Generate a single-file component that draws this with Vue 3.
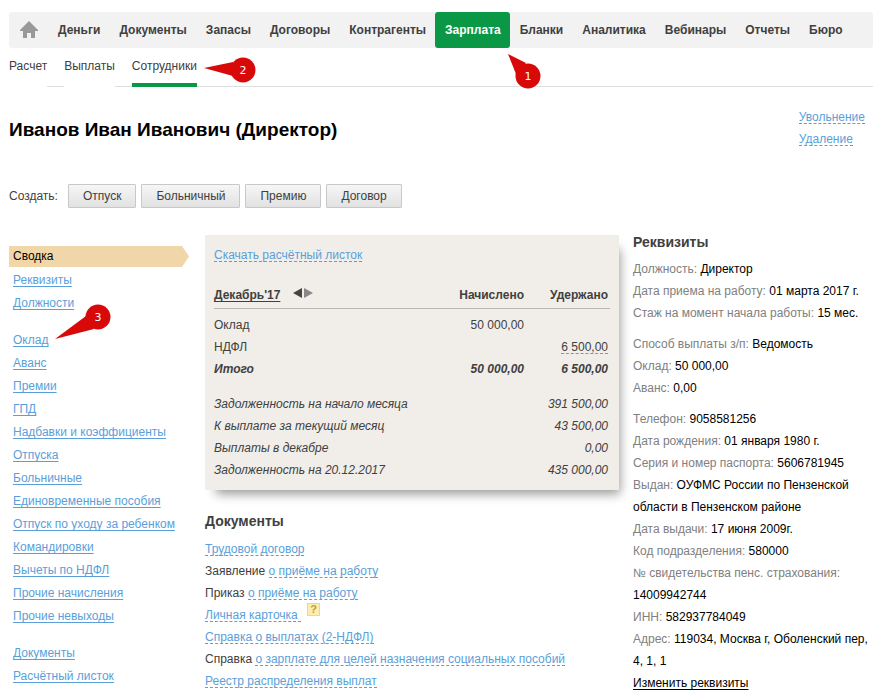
<script setup>
const mainMenu = [
  { title: 'Деньги' },
  { title: 'Документы' },
  { title: 'Запасы' },
  { title: 'Договоры' },
  { title: 'Контрагенты' },
  { title: 'Зарплата', active: true },
  { title: 'Бланки' },
  { title: 'Аналитика' },
  { title: 'Вебинары' },
  { title: 'Отчеты' },
  { title: 'Бюро' },
]

const subMenu = [
  { title: 'Расчет' },
  { title: 'Выплаты' },
  { title: 'Сотрудники', active: true },
]

const createActions = ['Отпуск', 'Больничный', 'Премию', 'Договор']

const sections = [
  ['Сводка', 'Реквизиты', 'Должности'],
  [
    'Оклад',
    'Аванс',
    'Премии',
    'ГПД',
    'Надбавки и коэффициенты',
    'Отпуска',
    'Больничные',
    'Единовременные пособия',
    'Отпуск по уходу за ребенком',
    'Командировки',
    'Вычеты по НДФЛ',
    'Прочие начисления',
    'Прочие невыходы',
  ],
  ['Документы', 'Расчётный листок'],
]

const balances = [
  { title: 'Задолженность на начало месяца', sum: '391 500,00' },
  { title: 'К выплате за текущий месяц', sum: '43 500,00' },
  { title: 'Выплаты в декабре', sum: '0,00' },
  { title: 'Задолженность на 20.12.2017', sum: '435 000,00' },
]

const documents = [
  { link: 'Трудовой договор' },
  { prefix: 'Заявление', link: 'о приёме на работу' },
  { prefix: 'Приказ', link: 'о приёме на работу' },
  { link: 'Личная карточка', help: true },
  { link: 'Справка о выплатах (2-НДФЛ)' },
  { prefix: 'Справка', link: 'о зарплате для целей назначения социальных пособий' },
  { link: 'Реестр распределения выплат' },
]

const details = [
  [
    ['Должность', 'Директор'],
    ['Дата приема на работу', '01 марта 2017 г.'],
    ['Стаж на момент начала работы', '15 мес.'],
  ],
  [
    ['Способ выплаты з/п', 'Ведомость'],
    ['Оклад', '50 000,00'],
    ['Аванс', '0,00'],
  ],
  [
    ['Телефон', '9058581256'],
    ['Дата рождения', '01 января 1980 г.'],
    ['Серия и номер паспорта', '5606781945'],
    ['Выдан', 'ОУФМС России по Пензенской области в Пензенском районе'],
    ['Дата выдачи', '17 июня 2009г.'],
    ['Код подразделения', '580000'],
    ['№ свидетельства пенс. страхования', '14009942744'],
    ['ИНН', '582937784049'],
    ['Адрес', '119034, Москва г, Оболенский пер, 4, 1, 1'],
  ],
]
</script>

<template>
  <div class="page">
    <nav class="main-menu">
      <a href="#" class="home" aria-label="Главная">
        <svg width="18" height="18" viewBox="0 0 18 18">
          <path d="M9 0 L18 9 V10 H15 V17 H11 V12 H7 V17 H3 V10 H0 V9 Z" fill="#999" />
        </svg>
      </a>
      <div v-for="item in mainMenu" :key="item.title" class="main-item">
        <a href="#" class="main-link" :class="{ active: item.active }">{{ item.title }}</a>
        <svg v-if="item.active" class="callout callout-main" width="34" height="36" viewBox="0 0 34 36">
          <path d="M0 0 L18 9 L8 20 Z" fill="#d80909" />
          <circle cx="20" cy="22" r="12.5" fill="#d80909" />
          <text x="20" y="26" text-anchor="middle">1</text>
        </svg>
      </div>
    </nav>

    <nav class="sub-menu">
      <div v-for="item in subMenu" :key="item.title" class="sub-item" :class="{ active: item.active }">
        <a href="#">{{ item.title }}</a>
        <svg v-if="item.active" class="callout callout-sub" width="52" height="26" viewBox="0 0 52 26">
          <path d="M0 11 L29 5 V19 Z" fill="#d80909" />
          <circle cx="39" cy="13" r="12.5" fill="#d80909" />
          <text x="39" y="17" text-anchor="middle">2</text>
        </svg>
      </div>
    </nav>

    <header class="head">
      <h1>Иванов Иван Иванович (Директор)</h1>
      <div class="head-actions">
        <a href="#" class="dashed">Увольнение</a>
        <a href="#" class="dashed">Удаление</a>
      </div>
    </header>

    <div class="create">
      <span class="create-label">Создать:</span>
      <button v-for="action in createActions" :key="action" type="button" class="btn">{{ action }}</button>
    </div>

    <main class="columns">
      <aside class="sections">
        <ul v-for="(group, g) in sections" :key="g">
          <li v-for="(section, i) in group" :key="section">
            <span v-if="g === 0 && i === 0" class="current">{{ section }}</span>
            <a v-else href="#">{{ section }}</a>
            <svg v-if="section === 'Оклад'" class="callout callout-section" width="56" height="36" viewBox="0 0 56 36">
              <path d="M0 35 L31 12 L39 25 Z" fill="#d80909" />
              <circle cx="43" cy="13" r="12.5" fill="#d80909" />
              <text x="43" y="17" text-anchor="middle">3</text>
            </svg>
          </li>
        </ul>
      </aside>

      <div class="center">
        <section class="payslip">
          <div class="row"><a href="#" class="dashed">Скачать расчётный листок</a></div>
          <table>
            <thead>
              <tr>
                <th scope="col">
                  <div class="period">
                    <a href="#">Декабрь'17</a>
                    <button type="button" class="arrow" aria-label="Предыдущий месяц">
                      <svg width="9" height="10" viewBox="0 0 9 10"><path d="M0 5 L9 0 V10 Z" fill="#444" /></svg>
                    </button>
                    <button type="button" class="arrow" aria-label="Следующий месяц">
                      <svg width="9" height="10" viewBox="0 0 9 10"><path d="M9 5 L0 0 V10 Z" fill="#888" /></svg>
                    </button>
                  </div>
                </th>
                <th scope="col" class="sum">Начислено</th>
                <th scope="col" class="sum withheld">Удержано</th>
              </tr>
            </thead>
            <tbody>
              <tr class="first">
                <td>Оклад</td>
                <td class="sum">50 000,00</td>
                <td></td>
              </tr>
              <tr>
                <td>НДФЛ</td>
                <td></td>
                <td class="sum"><a href="#" class="dashed dark">6 500,00</a></td>
              </tr>
              <tr class="total">
                <td>Итого</td>
                <td class="sum">50 000,00</td>
                <td class="sum">6 500,00</td>
              </tr>
            </tbody>
            <tbody class="balances">
              <tr v-for="line in balances" :key="line.title">
                <td colspan="2">{{ line.title }}</td>
                <td class="sum">{{ line.sum }}</td>
              </tr>
            </tbody>
          </table>
        </section>

        <section class="documents">
          <h2>Документы</h2>
          <ul>
            <li v-for="doc in documents" :key="doc.link + doc.prefix">
              {{ doc.prefix }} <a href="#" class="dashed">{{ doc.link }}<template v-if="doc.help">&nbsp;</template></a>
              <button v-if="doc.help" type="button" class="help">?</button>
            </li>
          </ul>
        </section>
      </div>

      <section class="details">
        <h2>Реквизиты</h2>
        <div v-for="(group, g) in details" :key="g" class="group">
          <p v-for="[label, value] in group" :key="label">
            <span class="label">{{ label }}:</span> {{ value }}
          </p>
        </div>
        <a href="#" class="edit">Изменить реквизиты</a>
      </section>
    </main>
  </div>
</template>

<style>
body {
  margin: 0;
  background: #fff;
}
</style>

<style scoped>
.page {
  padding: 12px 5px 4px 9px;
  font: 12px/22px "Liberation Sans", Arial, sans-serif;
  color: #404040;
}

h1,
h2,
p,
ul {
  margin: 0;
  padding: 0;
}

ul {
  list-style: none;
}

a {
  color: #5a9fd9;
}

h2 {
  margin-bottom: 10px;
  font-size: 14px;
  line-height: 14px;
  color: #404040;
}

.main-menu {
  display: flex;
  height: 36px;
  background: #f2f2f2;
  border-radius: 3px;
}

.home {
  display: flex;
  align-items: center;
  padding: 0 10px 0 11px;
}

.main-item {
  position: relative;
}

.main-link {
  display: block;
  padding: 0 9px 0 10px;
  line-height: 36px;
  font-weight: bold;
  color: #404040;
  text-decoration: none;
  border-radius: 3px;
}

.main-link.active {
  color: #fff;
  background: #0b9846;
}

.callout {
  position: absolute;
  z-index: 1;
  fill: #fff;
  font: 11px/12px "DejaVu Sans", sans-serif;
  pointer-events: none;
}

.callout-main {
  top: 42px;
  right: -32px;
}

.callout-sub {
  top: 9px;
  left: 72px;
}

.callout-section {
  top: -25px;
  left: 46px;
}

.sub-menu {
  display: flex;
  gap: 17px;
  height: 39px;
  background: linear-gradient(#dedede, #dedede) bottom / 100% 1px no-repeat;
}

.sub-item {
  position: relative;
  line-height: 36px;
  border-bottom: 4px solid #fff;
}

.sub-item.active {
  border-color: #0b9846;
}

.sub-item a {
  color: #404040;
  text-decoration: none;
}

.head {
  display: flex;
  justify-content: space-between;
  padding-top: 19px;
}

.head h1 {
  font-size: 19px;
  line-height: 48px;
  color: #000;
}

.head-actions {
  display: flex;
  flex-direction: column;
  align-items: flex-start;
  padding-right: 8px;
}

.dashed {
  display: inline-block;
  line-height: 12px;
  text-decoration: none;
  border-bottom: 1px dashed #5a9fd9;
}

.dashed.dark {
  color: #404040;
}

.head-actions .dashed {
  margin: 5px 0 4px;
}

.create {
  display: flex;
  align-items: center;
  gap: 5px;
  margin: 30px 0 27px;
}

.create-label {
  margin-right: 5px;
}

.btn {
  height: 24px;
  padding: 0 14px;
  font: inherit;
  line-height: 20px;
  color: #404040;
  background: linear-gradient(#f6f6f6, #e2e2e2);
  border: 1px solid #c8c8c8;
  border-radius: 1px;
}

.columns {
  display: grid;
  grid-template-columns: 182px minmax(0, 1fr) 240px;
  gap: 14px;
}

.sections {
  padding-top: 10px;
}

.sections ul + ul {
  margin-top: 14px;
}

.sections li {
  position: relative;
  padding-left: 4px;
  line-height: 23px;
}

.sections a {
  text-underline-offset: 2px;
  text-decoration-skip-ink: none;
}

.current {
  display: block;
  width: 176px;
  margin: 1px 0 2px -4px;
  padding-left: 4px;
  line-height: 21px;
  color: #000;
  background: #f1d6a9;
  clip-path: polygon(0 0, 173px 0, 100% 50%, 173px 100%, 0 100%);
}

.payslip {
  padding: 9px;
  background: #f1eee9;
  box-shadow: 6px 9px 10px -5px rgba(0, 0, 0, 0.4);
}

table {
  width: 100%;
  margin-top: 18px;
  border-collapse: collapse;
}

th,
td {
  padding: 0;
  text-align: left;
}

th {
  padding-bottom: 2px;
  border-bottom: 1px solid #b8b5b1;
}

.sum {
  padding-right: 2px;
  text-align: right;
}

.withheld {
  width: 82px;
}

.period {
  display: flex;
}

.period a {
  margin-right: 13px;
  color: #404040;
  text-underline-offset: 2px;
  text-decoration-skip-ink: none;
}

.arrow {
  display: flex;
  width: 9px;
  height: 18px;
  margin-right: 2px;
  padding: 4px 0;
  background: none;
  border: 0;
}

.first td {
  padding-top: 5px;
}

.total {
  font-weight: bold;
  font-style: italic;
}

.balances {
  font-style: italic;
}

.balances tr:first-child td {
  padding-top: 13px;
}

.documents {
  margin-top: 24px;
}

.help {
  width: 13px;
  height: 13px;
  margin: -6px 0 0 6px;
  padding: 0;
  font: bold 11px/11px "Liberation Sans", Arial, sans-serif;
  color: #b5a040;
  background: #fdeeb0;
  border: 1px solid #e0d8b0;
  vertical-align: 6px;
}

.details {
  color: #000;
}

.details h2 {
  margin-bottom: 9px;
}

.details .group + .group {
  margin-top: 9px;
}

.label {
  color: #808080;
}

.edit {
  color: #000;
  text-underline-offset: 2px;
  text-decoration-skip-ink: none;
}
</style>
